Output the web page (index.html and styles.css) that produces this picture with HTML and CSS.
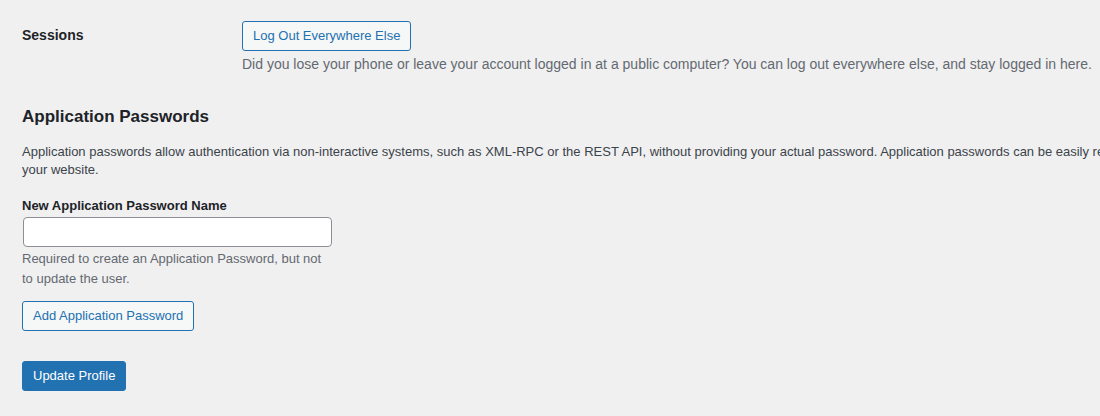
FILE: index.html
```html
<!DOCTYPE html>
<html lang="en">
<head>
<meta charset="utf-8">
<title>Profile</title>
<link rel="stylesheet" href="styles.css">
</head>
<body>
<div class="wrap">
  <div class="form-row">
    <div class="row-label">Sessions</div>
    <div class="row-field">
      <button type="button" class="button">Log Out Everywhere Else</button>
      <p class="row-desc">Did you lose your phone or leave your account logged in at a public computer? You can log out everywhere else, and stay logged in here.</p>
    </div>
  </div>

  <h2 class="section-title">Application Passwords</h2>
  <p class="section-intro">Application passwords allow authentication via non-interactive systems, such as XML-RPC or the REST API, without providing your actual password. Application passwords can be easily revoked. They cannot be used for traditional logins to your website.</p>

  <div class="create-app-pass">
    <label class="field-label" for="new_application_password_name">New Application Password Name</label>
    <input type="text" id="new_application_password_name" class="text-input">
    <p class="field-desc">Required to create an Application Password, but not to update the user.</p>
    <div class="add-row">
      <button type="button" class="button">Add Application Password</button>
    </div>
  </div>

  <div class="submit-row">
    <button type="submit" class="button button-primary">Update Profile</button>
  </div>
</div>
</body>
</html>
```

FILE: styles.css
```css
html, body {
  margin: 0;
  padding: 0;
}

body {
  background: #f0f0f1;
  color: #3c434a;
  font-family: "Liberation Sans", Arial, sans-serif;
  font-size: 13px;
  line-height: 1.4em;
  overflow: hidden;
}

.wrap {
  width: 1392px;
  padding: 6px 0 0 22px;
}

.form-row {
  display: grid;
  grid-template-columns: 220px 1fr;
}

.row-label {
  padding: 20px 0;
  font-size: 14px;
  line-height: 1.3;
  font-weight: 700;
  color: #1d2327;
}

.row-field {
  padding: 15px 0;
  font-size: 14px;
  line-height: 1.3;
}

.row-desc {
  margin: 4px 0 0;
  color: #646970;
  font-size: 14px;
  line-height: 1.3;
}

.button {
  display: inline-block;
  box-sizing: border-box;
  min-height: 30px;
  margin: 0;
  padding: 0 10px;
  font-family: inherit;
  font-size: 13px;
  line-height: 28px;
  color: #2271b1;
  background: #f6f7f7;
  border: 1px solid #2271b1;
  border-radius: 3px;
  cursor: pointer;
  white-space: nowrap;
  vertical-align: top;
}

.button-primary {
  color: #fff;
  background: #2271b1;
}

.section-title {
  margin: 19px 0 0;
  font-size: 17px;
  font-weight: 700;
  line-height: 1.15;
  color: #1d2327;
}

.section-intro {
  margin: 16px 0 0;
  line-height: 1.4;
}

.create-app-pass {
  width: 311px;
  margin-top: 16.5px;
}

.field-label {
  display: block;
  font-weight: 700;
  color: #1d2327;
  line-height: 1.5;
}

.text-input {
  display: block;
  box-sizing: border-box;
  width: 309px;
  height: 30px;
  margin: 2px 1px 0;
  padding: 0 8px;
  font-family: inherit;
  font-size: 14px;
  color: #2c3338;
  background: #fff;
  border: 1px solid #8c8f94;
  border-radius: 4px;
}

.field-desc {
  margin: 2px 0 0;
  width: 305px;
  color: #646970;
  line-height: 1.5;
}

.add-row {
  margin-top: 13px;
}

.submit-row {
  margin-top: 30px;
}
```
